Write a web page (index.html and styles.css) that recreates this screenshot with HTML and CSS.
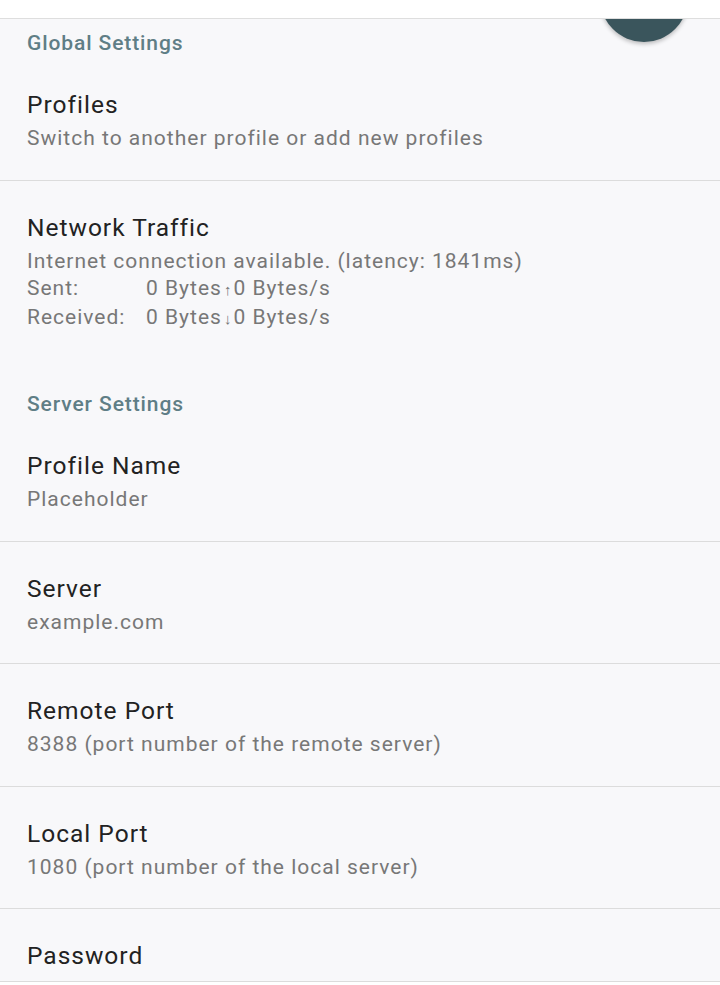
FILE: index.html
```html
<!DOCTYPE html>
<html lang="en">
<head>
  <meta charset="UTF-8">
  <meta name="viewport" content="width=device-width, initial-scale=1.0">
  <title>Settings</title>
  <link rel="stylesheet" href="styles.css">
</head>
<body>
  <div class="topbar"></div>
  <div class="list">
    <div class="fab"></div>

    <div class="category">Global Settings</div>
    <div class="pref sep">
      <div class="title">Profiles</div>
      <div class="summary">Switch to another profile or add new profiles</div>
    </div>
    <div class="pref">
      <div class="title">Network Traffic</div>
      <div class="summary">Internet connection available. (latency: 1841ms)</div>
      <div class="traffic">
        <span>Sent:</span><span>0 Bytes<span class="arrow">↑</span>0 Bytes/s</span>
        <span>Received:</span><span>0 Bytes<span class="arrow">↓</span>0 Bytes/s</span>
      </div>
    </div>

    <div class="category second">Server Settings</div>
    <div class="pref sep">
      <div class="title">Profile Name</div>
      <div class="summary">Placeholder</div>
    </div>
    <div class="pref sep">
      <div class="title">Server</div>
      <div class="summary">example.com</div>
    </div>
    <div class="pref sep">
      <div class="title">Remote Port</div>
      <div class="summary">8388 (port number of the remote server)</div>
    </div>
    <div class="pref sep">
      <div class="title">Local Port</div>
      <div class="summary">1080 (port number of the local server)</div>
    </div>
    <div class="pref">
      <div class="title">Password</div>
      <div class="summary">••••••••</div>
    </div>
  </div>
</body>
</html>
```

FILE: styles.css
```css
* {
  padding: 0;
  margin: 0;
  box-sizing: border-box;
}
body {
  width: 720px;
  height: 985px;
  overflow: hidden;
  background: #ffffff;
  font-family: Roboto, "Noto Sans", sans-serif;
}
.topbar {
  height: 19px;
  background: #ffffff;
  border-bottom: 1px solid #dedede;
}
.list {
  position: relative;
  height: 963px;
  overflow: hidden;
  background: #f8f8fa;
  border-bottom: 1px solid #dcdcdc;
}
/* floating button sits under the toolbar, only its bottom shows */
.fab {
  position: absolute;
  top: -65px;
  left: 600px;
  width: 88px;
  height: 88px;
  border-radius: 50%;
  background: #3a555c;
  box-shadow: 0 2px 4px rgba(0, 0, 0, 0.25);
}
.category {
  padding: 12px 27px 3px;
  font-size: 21px;
  line-height: 24px;
  font-weight: 500;
  letter-spacing: 0.9px;
  color: #5f7e86;
}
.category.second {
  padding-top: 32px;
}
.pref {
  padding: 31px 27px 27.5px;
}
.pref.sep {
  border-bottom: 1px solid #dcdcdc;
}
.title {
  font-size: 24.5px;
  line-height: 32px;
  letter-spacing: 1px;
  color: #222222;
}
.summary {
  margin-top: 4px;
  font-size: 21px;
  line-height: 27px;
  letter-spacing: 1px;
  color: #777777;
}
.traffic {
  display: grid;
  grid-template-columns: 119px auto;
  font-size: 21px;
  line-height: 27px;
  letter-spacing: 1px;
  color: #777777;
}
.arrow {
  font-size: 15px;
  letter-spacing: 0;
  padding: 0 2px;
}
```
